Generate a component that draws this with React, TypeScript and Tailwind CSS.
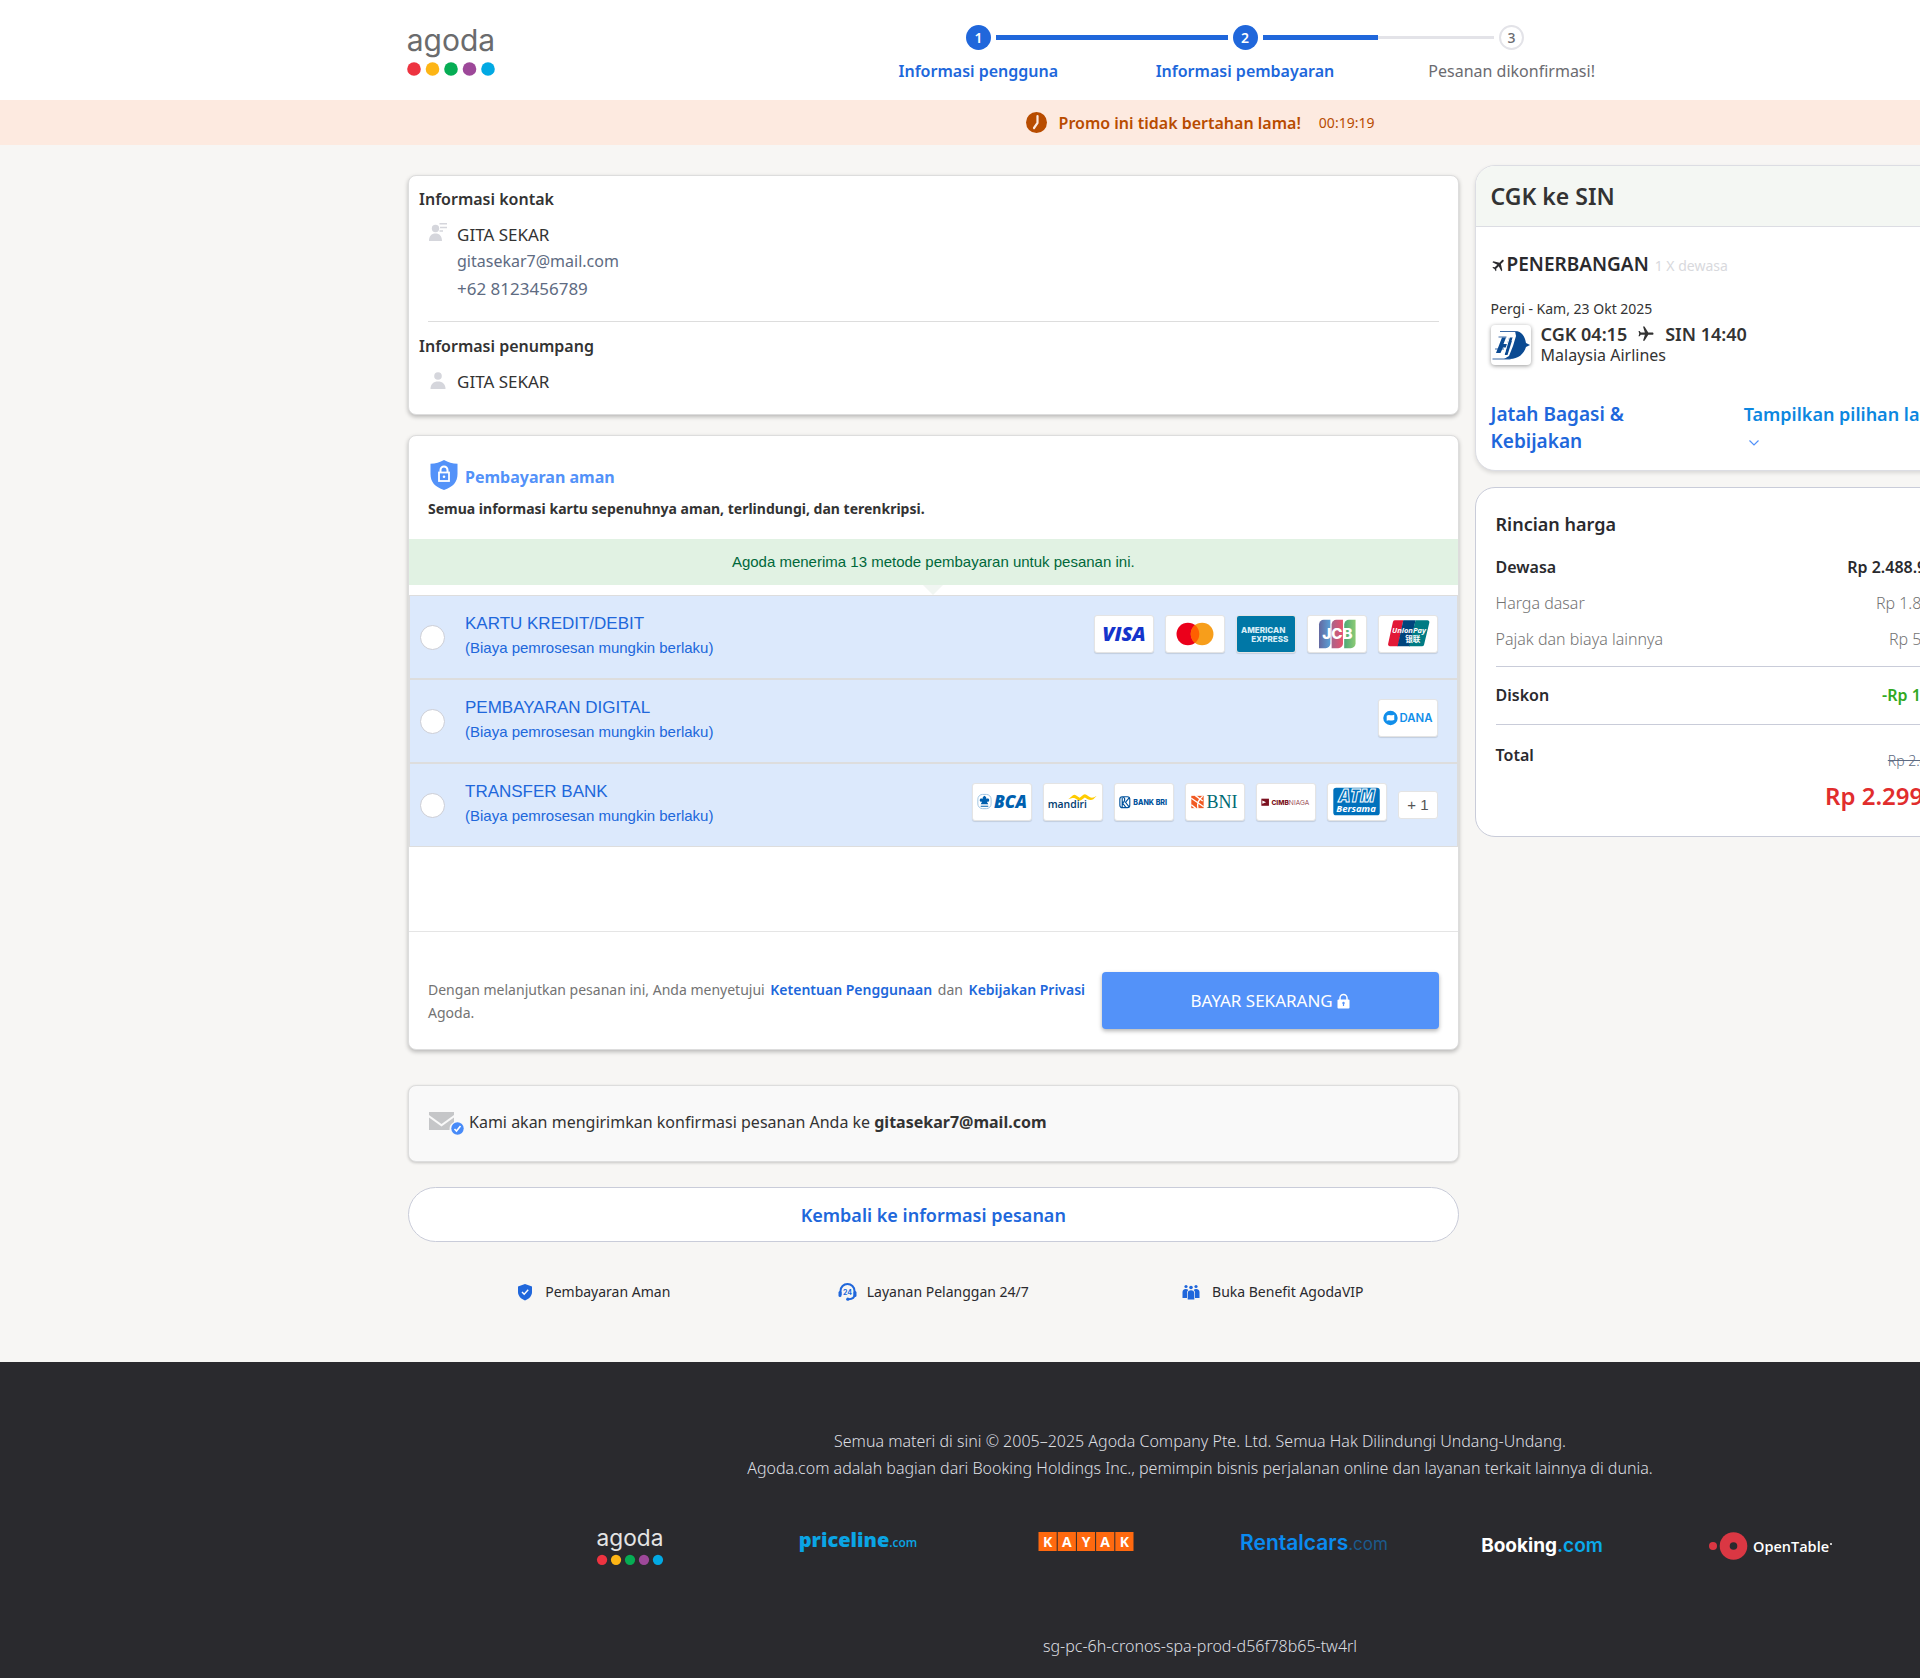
import type { ReactNode } from "react";
import { MdFlight } from "react-icons/md";

const DOTS = ["#ed3340", "#fdb515", "#06ad54", "#9d4899", "#02a9e3"];

function AgodaLogo({ className, ink }: { className: string; ink: string }) {
  return (
    <svg viewBox="0 0 90 50" className={className} role="img" aria-label="agoda">
      <text x="45" y="24" textAnchor="middle" fontFamily="Inter, sans-serif" fontWeight="400" fontSize="30" fill={ink}>
        agoda
      </text>
      {DOTS.map((c, i) => (
        <circle key={c} cx={8 + i * 18.5} cy="42" r="6.8" fill={c} />
      ))}
    </svg>
  );
}

function PayTile({ label, children }: { label: string; children: ReactNode }) {
  return (
    <svg
      viewBox="0 0 60 38"
      role="img"
      aria-label={label}
      className="h-[38px] w-[60px] shrink-0 rounded-[3px] border border-[#e4e4e4] bg-white shadow-[0_1px_1px_rgba(0,0,0,0.12)]"
    >
      {children}
    </svg>
  );
}

const cardTiles = (
  <>
    <PayTile label="Visa">
      <text x="30" y="26.500" textAnchor="middle" fontFamily="Open Sans, sans-serif" fontWeight="800" fontStyle="italic" fontSize="21" fill="#1434cb">VISA</text>
    </PayTile>
    <PayTile label="Mastercard">
      <circle cx="22.5" cy="19" r="12" fill="#eb001b" />
      <circle cx="37.5" cy="19" r="12" fill="#f79e1b" />
      <path d="M30 9.6a12 12 0 0 1 0 18.8a12 12 0 0 1 0-18.8z" fill="#ff5f00" />
    </PayTile>
    <PayTile label="American Express">
      <rect x="-2" y="-2" width="64" height="42" fill="#0077a6" />
      <text x="27" y="17.5" textAnchor="middle" fontFamily="Inter, sans-serif" fontWeight="800" fontSize="8.500" fill="#d8edf6">AMERICAN</text>
      <text x="34" y="27.5" textAnchor="middle" fontFamily="Inter, sans-serif" fontWeight="800" fontSize="8.500" fill="#d8edf6">EXPRESS</text>
    </PayTile>
    <PayTile label="JCB">
      <defs>
        <linearGradient id="jcb-blue"><stop offset="0" stopColor="#6468a0" /><stop offset="1" stopColor="#5aa0d6" /></linearGradient>
        <linearGradient id="jcb-red"><stop offset="0" stopColor="#a8648a" /><stop offset="1" stopColor="#e8506c" /></linearGradient>
        <linearGradient id="jcb-green"><stop offset="0" stopColor="#4fa878" /><stop offset="1" stopColor="#8ccb74" /></linearGradient>
      </defs>
      <path d="M11 9a5 5 0 0 1 5-5h7v25a5 5 0 0 1-5 5h-7z" fill="url(#jcb-blue)" />
      <path d="M24.300 9a5 5 0 0 1 5-5h7v25a5 5 0 0 1-5 5h-7z" fill="url(#jcb-red)" />
      <path d="M37.600 9a5 5 0 0 1 5-5h7v25a5 5 0 0 1-5 5h-7z" fill="url(#jcb-green)" />
      <text x="30.500" y="24.500" textAnchor="middle" fontFamily="Inter, sans-serif" fontWeight="800" fontSize="16" fill="#fff">JCB</text>
    </PayTile>
    <PayTile label="UnionPay">
      <path d="M16 4.500h9L19.500 32H11a2 2 0 0 1-2-2.500L14 6.500a2.500 2.500 0 0 1 2-2z" fill="#e21836" />
      <path d="M25 4.500h13L32 32H19z" fill="#00447c" />
      <path d="M38 4.500h12.500a2 2 0 0 1 2 2.500L47 30a2.500 2.500 0 0 1-2.500 2H31z" fill="#007b84" />
      <text x="31" y="17.500" textAnchor="middle" fontFamily="Open Sans, sans-serif" fontWeight="700" fontStyle="italic" fontSize="8" fill="#fff">UnionPay</text>
      <text x="35" y="27" textAnchor="middle" fontFamily="Noto Sans CJK SC, sans-serif" fontWeight="700" fontSize="8" fill="#fff">银联</text>
    </PayTile>
  </>
);

const digitalTiles = (
  <PayTile label="DANA">
    <circle cx="11.500" cy="19" r="7.600" fill="#118eea" />
    <path d="M7.500 16.500c2.500-2 5 .6 8-.8v5.500c-3 1.500-5.500-1-8 .8z" fill="#fff" />
    <text x="38.500" y="23" textAnchor="middle" fontFamily="Inter, sans-serif" fontWeight="600" fontSize="12" fill="#118eea">DANA</text>
  </PayTile>
);

const bankTiles = (
  <>
    <PayTile label="BCA">
      <rect x="4.500" y="11" width="14" height="15" rx="5" fill="none" stroke="#9cc3e2" />
      <path d="M11.500 12.500c1.600 1 2.300 2 1.800 3.300 1.500-.8 3-.3 3.200 1 .2 1.400-1 2.200-2.500 2l1.500 2.700H7.500l1.500-2.700c-1.500.2-2.700-.6-2.500-2 .2-1.300 1.700-1.800 3.200-1-.5-1.300.2-2.300 1.800-3.300z" fill="#0060af" />
      <path d="M7.500 23.500h8" stroke="#0060af" strokeWidth="1.200" />
      <text x="39" y="25" textAnchor="middle" fontFamily="Open Sans, sans-serif" fontWeight="800" fontStyle="italic" fontSize="18" fill="#0060af">BCA</text>
    </PayTile>
    <PayTile label="Mandiri">
      <path d="M25 16l5-4c1-.8 2-.8 3 0l4 2.500 4-3.200c1-.8 2-.8 3 0l4 2.700c2 .8 4 .5 7-1.500l-3.500 3.500c-2 1.200-4 1-6 0l-3-1.800-4 3c-1 .7-2 .7-3 0l-3.500-2.200c-2-.9-4.500.2-7 1z" fill="#fc0" />
      <text x="24" y="25.500" textAnchor="middle" fontFamily="Open Sans, sans-serif" fontWeight="600" fontSize="11" fill="#003a70">mandiri</text>
    </PayTile>
    <PayTile label="Bank BRI">
      <rect x="4.500" y="13.500" width="10.500" height="11.500" rx="2.500" fill="none" stroke="#00529c" strokeWidth="1.200" />
      <path d="M7 14v11M7 19.500c3 0 3.500-5 1-5.500M7 19.500l4 5.500M14.500 14.500l-4 4.800 4 5" fill="none" stroke="#00529c" strokeWidth="1.200" />
      <text x="36.500" y="22.500" textAnchor="middle" fontFamily="Inter, sans-serif" fontWeight="800" fontSize="7.500" fill="#00529c">BANK BRI</text>
    </PayTile>
    <PayTile label="BNI">
      <rect x="5" y="12.500" width="13" height="13" fill="#f15a23" />
      <path d="M5 15l13 9M9 12l8 6M5 22l5 4M12 26c-1-4 0-9 5-13" fill="none" stroke="#fff" strokeWidth="1.400" />
      <text x="37.500" y="25.500" textAnchor="middle" fontFamily="Liberation Serif, serif" fontSize="19" fill="#006a73">BNI</text>
    </PayTile>
    <PayTile label="CIMB Niaga">
      <rect x="4" y="15.500" width="8" height="7.500" fill="#7b1120" />
      <path d="M5 17.500l4 1.700-4 1.700z" fill="#fff" />
      <text x="34.500" y="21.800" textAnchor="middle" fontFamily="Inter, sans-serif" fontSize="7" fill="#7b1120"><tspan fontWeight="800">CIMB</tspan><tspan fontWeight="300">NIAGA</tspan></text>
    </PayTile>
    <PayTile label="ATM Bersama">
      <rect x="5" y="4" width="49" height="29" rx="3" fill="#0071bc" />
      <text x="30" y="19" textAnchor="middle" fontFamily="Open Sans, sans-serif" fontWeight="800" fontStyle="italic" fontSize="18" fill="#0071bc" stroke="#fff" strokeWidth="1">ATM</text>
      <text x="29" y="30" textAnchor="middle" fontFamily="Open Sans, sans-serif" fontWeight="700" fontStyle="italic" fontSize="10" fill="#fff">Bersama</text>
    </PayTile>
    <span className="mb-0.5 self-end rounded-[3px] border border-[#e4e4e4] bg-white px-2 text-[15px] leading-[26px] text-[#555]">+ 1</span>
  </>
);

const methods = [
  { id: "card", title: "KARTU KREDIT/DEBIT", tiles: cardTiles },
  { id: "digital", title: "PEMBAYARAN DIGITAL", tiles: digitalTiles },
  { id: "bank", title: "TRANSFER BANK", tiles: bankTiles },
];

function Header() {
  return (
    <header className="bg-white">
      <div className="mx-auto flex h-[100px] max-w-[1600px] pt-[25px]">
        <a href="#" className="block w-[445px] pl-1.5 pt-0.5">
          <AgodaLogo className="h-[50px] w-[90px] overflow-visible" ink="#6a6b6d" />
        </a>
        <div className="w-[800px]">
          <div className="flex items-center gap-[5px] px-[121px]">
            <span className="flex size-[25px] items-center justify-center rounded-full bg-[#2067db] text-sm font-semibold text-white">1</span>
            <span className="h-[5px] flex-1 bg-[#2067db]" />
            <span className="flex size-[25px] items-center justify-center rounded-full bg-[#2067db] text-sm font-semibold text-white">2</span>
            <span className="flex flex-1 items-center">
              <span className="h-[5px] flex-1 bg-[#2067db]" />
              <span className="h-[3px] flex-1 bg-[#e3e3e8]" />
            </span>
            <span className="flex size-[25px] items-center justify-center rounded-full border-2 border-[#e3e3e8] text-sm font-medium text-[#6b6b70]">3</span>
          </div>
          <div className="mt-2 grid grid-cols-3 text-center leading-[26px]">
            <span className="font-semibold text-[#2067db]">Informasi pengguna</span>
            <span className="font-semibold text-[#2067db]">Informasi pembayaran</span>
            <span className="text-[#6b6b70]">Pesanan dikonfirmasi!</span>
          </div>
        </div>
      </div>
    </header>
  );
}

function ContactCard() {
  return (
    <section className="rounded-lg border border-[#ddd] bg-white px-2.5 pt-2.5 pb-[19px] leading-[27px] shadow-[0_2px_4px_rgba(0,0,0,0.25)]">
      <h2 className="font-semibold">Informasi kontak</h2>
      <div className="mt-2 flex gap-2.5 pl-2.5">
        <svg viewBox="0 0 18 18" className="mt-0.5 size-[18px]" fill="#d5d6dc">
          <circle cx="6.500" cy="5.500" r="3.700" />
          <path d="M0 18c0-5 2.500-7.500 6.500-7.500S13 13 13 18zM10.500 0H18v1.500h-7.500zM11 3.700h7v1.500h-7zM10.500 7.200H14v1.500h-3.500z" />
        </svg>
        <div className="text-[17px]">
          <p>GITA SEKAR</p>
          <p className="text-base leading-[27px] text-[#5e6b82]">gitasekar7@mail.com</p>
          <p className="text-[#5e6b82]">+62 8123456789</p>
        </div>
      </div>
      <div className="mx-[9px] mt-[19px] border-t border-[#ddd]" />
      <h2 className="mt-[11px] font-semibold">Informasi penumpang</h2>
      <div className="mt-2 flex gap-2.5 pl-2.5">
        <svg viewBox="0 0 18 18" className="mt-1 size-[18px]" fill="#d5d6dc">
          <circle cx="9" cy="4" r="3.800" />
          <path d="M1.500 17c0-5 3-7.500 7.500-7.500s7.500 2.500 7.500 7.500z" />
        </svg>
        <p className="text-[17px]">GITA SEKAR</p>
      </div>
    </section>
  );
}

function PaymentCard() {
  return (
    <section className="mt-5 rounded-lg border border-[#ddd] bg-white shadow-[0_2px_4px_rgba(0,0,0,0.25)]">
      <div className="px-[19px] pt-6">
        <div className="flex items-center gap-[7px]">
          <svg viewBox="0 0 28 30" className="ml-0.5 h-[30px] w-7">
            <path d="M14 0c4 2.500 8.500 3.500 13.500 3.700V14c0 8-4.500 13-13.500 16C5 27 .5 22 .5 14V3.700C5.500 3.500 10 2.500 14 0z" fill="#5392f9" />
            <path d="M10.500 12.500V10a3.500 3.500 0 0 1 7 0v2.500" fill="none" stroke="#fff" strokeWidth="2" />
            <rect x="9" y="12.500" width="10" height="8.500" fill="none" stroke="#fff" strokeWidth="1.800" />
            <circle cx="14" cy="16.700" r="1.300" fill="#fff" />
          </svg>
          <h2 className="mt-1 font-bold text-[#5392f9]">Pembayaran aman</h2>
        </div>
        <p className="mt-[9px] text-sm leading-5 font-bold">Semua informasi kartu sepenuhnya aman, terlindungi, dan terenkripsi.</p>
      </div>
      <p className="mt-5 bg-[#e1f2e3] text-center font-['Liberation_Sans',sans-serif] text-[15px] leading-[46px] text-[#00683a]">
        Agoda menerima 13 metode pembayaran untuk pesanan ini.
      </p>
      <svg viewBox="0 0 20 10" className="mx-auto block h-2.5 w-5">
        <path d="M0 0h20L10 10z" fill="#f1f6f2" />
      </svg>
      <fieldset className="font-['Liberation_Sans',sans-serif] text-[#2067db]">
        {methods.map((m) => (
          <label key={m.id} className="flex h-[84px] items-center border border-[#ddd] bg-[#dce9fc] pr-[19px] pl-2.5">
            <input type="radio" name="method" value={m.id} className="size-[25px] shrink-0 appearance-none rounded-full border border-[#ccced6] bg-white checked:border-8 checked:border-[#2067db]" />
            <span className="mb-0.5 ml-5 flex-1">
              <span className="block text-[17px] leading-6">{m.title}</span>
              <span className="block text-[15px] leading-6">(Biaya pemrosesan mungkin berlaku)</span>
            </span>
            <span className="mb-1.5 flex gap-[11px]">{m.tiles}</span>
          </label>
        ))}
      </fieldset>
      <div className="mt-[84px] flex items-center gap-2 border-t border-[#e5e5e5] px-[19px] pt-10 pb-5">
        <p className="flex-1 text-sm leading-[23px] text-[#737373]">
          Dengan melanjutkan pesanan ini, Anda menyetujui{" "}
          <a href="#" className="mx-0.5 font-semibold text-[#2067db]">Ketentuan Penggunaan</a> dan{" "}
          <a href="#" className="mx-0.5 font-semibold text-[#2067db]">Kebijakan Privasi</a> Agoda.
        </p>
        <button className="flex h-[57px] w-1/3 items-center justify-center gap-1 rounded bg-[#5392f9] text-[17px] text-white shadow-[0_2px_4px_rgba(0,0,0,0.3)]">
          BAYAR SEKARANG
          <svg viewBox="0 0 13 16" className="h-4 w-[13px]">
            <path d="M3 7V5a3.500 3.500 0 0 1 7 0v2" fill="none" stroke="#fff" strokeWidth="1.500" />
            <rect x=".5" y="6.500" width="12" height="9" rx="1" fill="#fff" />
            <circle cx="6.500" cy="10" r="1.200" fill="#5392f9" />
            <path d="M6.500 10v3" stroke="#5392f9" strokeWidth="1.200" />
          </svg>
        </button>
      </div>
    </section>
  );
}

function ConfirmCard() {
  return (
    <section className="mt-[35px] flex items-center gap-[5px] rounded-lg border border-[#ddd] bg-[#f9f9f9] px-[19px] pt-[23px] pb-[25px] leading-[27px] shadow-[0_1px_3px_rgba(0,0,0,0.2)]">
      <svg viewBox="0 0 36 24" className="h-6 w-9">
        <path d="M1 1h25v3l-12.500 9L1 4z" fill="#c5c6c8" />
        <path d="M1 6.500l12.500 9L26 6.500V11a8 8 0 0 0-4.500 8H1z" fill="#c5c6c8" />
        <circle cx="29.500" cy="17.500" r="6.200" fill="#488bf8" />
        <path d="M26.500 18l2 2 4-5" fill="none" stroke="#fff" strokeWidth="1.600" />
      </svg>
      <p>
        Kami akan mengirimkan konfirmasi pesanan Anda ke <b>gitasekar7@mail.com</b>
      </p>
    </section>
  );
}

function Benefits() {
  return (
    <ul className="mt-10 grid grid-cols-3 px-4 pb-[60px] text-sm leading-5 text-[#2a2a2e]">
      <li className="flex items-center justify-center gap-3">
        <svg viewBox="0 0 16 18" className="h-[18px] w-4">
          <path d="M8 1l7 2.500v5.500c0 4-3 7-7 8.500-4-1.500-7-4.500-7-8.500V3.500z" fill="#2067db" />
          <path d="M5 9l2.200 2.300L11.200 6.800" fill="none" stroke="#fff" strokeWidth="1.400" />
        </svg>
        Pembayaran Aman
      </li>
      <li className="flex items-center justify-center gap-2.5">
        <svg viewBox="0 0 19 18" className="h-[18px] w-[19px]">
          <path d="M2.500 12V8a7 7 0 0 1 14 0v4c0 2.500-2 4-6 4.200" fill="none" stroke="#2067db" strokeWidth="2" />
          <rect x="0.500" y="8" width="3" height="6" rx="1.500" fill="#2067db" />
          <rect x="15.500" y="8" width="3" height="6" rx="1.500" fill="#2067db" />
          <circle cx="9.800" cy="16.200" r="1.600" fill="#2067db" />
          <text x="9.500" y="11.700" textAnchor="middle" fontFamily="Inter, sans-serif" fontWeight="700" fontSize="7" fill="#2067db">24</text>
        </svg>
        Layanan Pelanggan 24/7
      </li>
      <li className="flex items-center justify-center gap-3">
        <svg viewBox="0 0 18 16" className="h-4 w-[18px]" fill="#2067db">
          <circle cx="4" cy="2.500" r="1.600" />
          <circle cx="14" cy="2.500" r="1.600" />
          <circle cx="9" cy="3.500" r="1.800" />
          <path d="M.5 14V8A3 3 0 0 1 4 5c1 0 1.800.3 2.300 1-.9.800-1.300 1.800-1.300 3v5zM17.500 14V8A3 3 0 0 0 14 5c-1 0-1.800.3-2.300 1 .9.800 1.300 1.800 1.300 3v5zM5.700 15.500V9.500C5.700 7.500 7 6.300 9 6.300s3.300 1.200 3.300 3.200v6z" />
        </svg>
        Buka Benefit AgodaVIP
      </li>
    </ul>
  );
}

function TripCard() {
  return (
    <section className="overflow-hidden rounded-[20px] border border-[#dcdde3] bg-white shadow-[0_2px_4px_rgba(0,0,0,0.12)]">
      <h2 className="border-b border-[#dcdde3] bg-[#f4f7f3] px-[15px] text-[23px] leading-[60px] font-semibold">CGK ke SIN</h2>
      <div className="px-[15px] pt-6 pb-[15px]">
        <h3 className="flex items-baseline gap-1.5 leading-[27px]">
          <span className="flex items-baseline text-[19px] font-semibold text-[#2a2a2e]">
            <MdFlight className="size-4 rotate-45 self-center" />
            PENERBANGAN
          </span>
          <span className="text-sm text-[#d8d9dd]">1 X dewasa</span>
        </h3>
        <p className="mt-[21px] text-sm leading-5">Pergi - Kam, 23 Okt 2025</p>
        <div className="mt-1 flex gap-2.5">
          <svg viewBox="0 0 40 40" className="mt-0.5 size-10 rounded bg-white shadow-[0_1px_4px_rgba(0,0,0,0.4)]">
            <path d="M24 6c7 0 10 6 11 12l4 2-4 2c-2 7-8 12-16 12h-6l5-3 4-10 3-10z" fill="#0b4a92" />
            <path d="M9 6.500h17M7.500 12h8M4 24h9M1.500 34h18" fill="none" stroke="#3c6aa6" strokeWidth="1.200" />
            <path d="M11 12.500h4L12.500 19H16l2-6.500h4L16.500 30h-3l2-7.500H12L9.500 28H5z" fill="#0b4a92" />
            <path d="M18.500 12l-5.500 18M23 10l-2 6" stroke="#fff" strokeWidth="1" />
          </svg>
          <div>
            <p className="flex items-center gap-2.5 text-lg leading-[22px] font-semibold">
              CGK 04:15
              <MdFlight className="size-[18px] rotate-90" />
              SIN 14:40
            </p>
            <p className="leading-[21px]">Malaysia Airlines</p>
          </div>
        </div>
        <div className="mt-[35px] grid grid-cols-[254fr_233fr] text-lg leading-[27px] font-semibold">
          <a href="#" className="pr-20 text-[19px] leading-[27px] text-[#2067db]">Jatah Bagasi &amp; Kebijakan</a>
          <button className="flex flex-col items-start text-left whitespace-nowrap text-[#0c87e0]">
            Tampilkan pilihan lainnya
            <svg viewBox="0 0 10 6" className="mt-3 ml-[5px] h-1.5 w-2.5">
              <path d="M.5.500L5 5 9.500.5" fill="none" stroke="#5392f9" strokeWidth="1.200" />
            </svg>
          </button>
        </div>
      </div>
    </section>
  );
}

function PriceCard() {
  return (
    <section className="mt-4 rounded-[20px] border border-[#c9ccd9] bg-white px-5 pt-[23px] pb-[22px] text-[#2a2a2e]">
      <h2 className="text-lg leading-[27px] font-semibold">Rincian harga</h2>
      <dl className="mt-[11px] leading-9">
        <div className="flex justify-between font-semibold"><dt>Dewasa</dt><dd>Rp 2.488.900 x 1</dd></div>
        <div className="flex justify-between font-light text-[#737373]"><dt>Harga dasar</dt><dd>Rp 1.888.900</dd></div>
        <div className="flex justify-between font-light text-[#737373]"><dt>Pajak dan biaya lainnya</dt><dd>Rp 599.999</dd></div>
        <div className="mt-[9px] flex justify-between border-y border-[#c9ccd9] leading-[57px] font-semibold"><dt>Diskon</dt><dd className="text-[#32a923]">-Rp 189.001</dd></div>
        <div className="mt-3 flex justify-between">
          <dt className="font-semibold">Total</dt>
          <dd className="pt-[14px] text-right">
            <s className="block text-sm leading-5 font-light text-[#5e6b82]">Rp 2.488.900</s>
            <span className="mt-[7px] block text-2xl leading-9 font-semibold text-[#e12d2d]">Rp 2.299.899</span>
          </dd>
        </div>
      </dl>
    </section>
  );
}

function Footer() {
  return (
    <footer className="bg-[#2a2a2e] pt-[66px] pb-[18px] text-center leading-[27px] font-light text-[#dddfe2]">
      <p>Semua materi di sini © 2005–2025 Agoda Company Pte. Ltd. Semua Hak Dilindungi Undang-Undang.</p>
      <p>Agoda.com adalah bagian dari Booking Holdings Inc., pemimpin bisnis perjalanan online dan layanan terkait lainnya di dunia.</p>
      <div className="mx-auto mt-[46px] grid h-[38px] max-w-[1368px] grid-cols-6 justify-items-center">
        <AgodaLogo className="h-[38px] w-[68px] overflow-visible" ink="#e4e4e4" />
        <svg viewBox="0 0 122 36" className="h-9 w-[122px] overflow-visible" role="img" aria-label="priceline.com">
          <text x="61" y="19" textAnchor="middle" fontFamily="Open Sans, sans-serif" fill="#0aa5e5"><tspan fontWeight="800" fontSize="20">priceline</tspan><tspan fontWeight="600" fontSize="12">.com</tspan></text>
        </svg>
        <svg viewBox="0 0 96 36" className="h-9 w-24" role="img" aria-label="KAYAK">
          {["K", "A", "Y", "A", "K"].map((ch, i) => (
            <g key={i}>
              <rect x={i * 19.2 + 0.5} y="4" width="18.2" height="19" fill="#ff690f" />
              <text x={i * 19.2 + 9.6} y="18.5" textAnchor="middle" fontFamily="Open Sans, sans-serif" fontWeight="700" fontSize="14" fill="#fff">{ch}</text>
            </g>
          ))}
        </svg>
        <svg viewBox="0 0 150 36" className="h-9 w-[150px] overflow-visible" role="img" aria-label="Rentalcars.com">
          <text x="75" y="22" textAnchor="middle" fontFamily="Inter, sans-serif"><tspan fontWeight="600" fontSize="21" fill="#0a8bf0">Rentalcars</tspan><tspan fontWeight="400" fontSize="17" fill="#1b5a8c">.com</tspan></text>
        </svg>
        <svg viewBox="0 0 122 36" className="h-9 w-[122px] overflow-visible" role="img" aria-label="Booking.com">
          <text x="61" y="24" textAnchor="middle" fontFamily="Inter, sans-serif" fontWeight="700" fontSize="19" fill="#fff">Booking<tspan fontWeight="600" fill="#0ba9ea">.com</tspan></text>
        </svg>
        <svg viewBox="0 0 124 36" className="h-9 w-[124px] overflow-visible" role="img" aria-label="OpenTable">
          <circle cx="5" cy="18" r="4" fill="#da3743" />
          <circle cx="25.500" cy="18" r="13.800" fill="#da3743" />
          <circle cx="25.500" cy="18" r="3.800" fill="#2a2a2e" />
          <text x="45" y="23.500" fontFamily="Open Sans, sans-serif" fontWeight="600" fontSize="14.500" fill="#fff">OpenTable</text>
          <circle cx="123" cy="16" r="1" fill="#fff" />
        </svg>
      </div>
      <p className="mt-[67px]">sg-pc-6h-cronos-spa-prod-d56f78b65-tw4rl</p>
    </footer>
  );
}

export default function App() {
  return (
    <div className="overflow-x-hidden bg-[#f7f6f4] font-['Noto_Sans',sans-serif] text-base text-[#333]">
      <div className="w-[125%]">
        <Header />
        <div className="flex h-[45px] items-center justify-center bg-[#fdeae0] text-[#b84c00]">
          <svg viewBox="0 0 21 21" className="size-[21px]">
            <circle cx="10.500" cy="10.500" r="10.500" fill="#b84c00" />
            <path d="M11.500 4v7l-3.500 5" fill="none" stroke="#fdeae0" strokeWidth="2.200" strokeLinecap="round" />
          </svg>
          <span className="ml-3 font-semibold">Promo ini tidak bertahan lama!</span>
          <span className="ml-[18px] text-sm">00:19:19</span>
        </div>
        <main className="mx-auto grid max-w-[1600px] grid-cols-[67fr_33fr] gap-4 px-2 pt-5">
          <div className="pt-2.5">
            <ContactCard />
            <PaymentCard />
            <ConfirmCard />
            <button className="mt-[25px] block h-[55px] w-full rounded-full border border-[#c9ccd9] bg-white text-lg font-semibold text-[#2067db]">
              Kembali ke informasi pesanan
            </button>
            <Benefits />
          </div>
          <aside>
            <TripCard />
            <PriceCard />
          </aside>
        </main>
        <Footer />
      </div>
    </div>
  );
}
